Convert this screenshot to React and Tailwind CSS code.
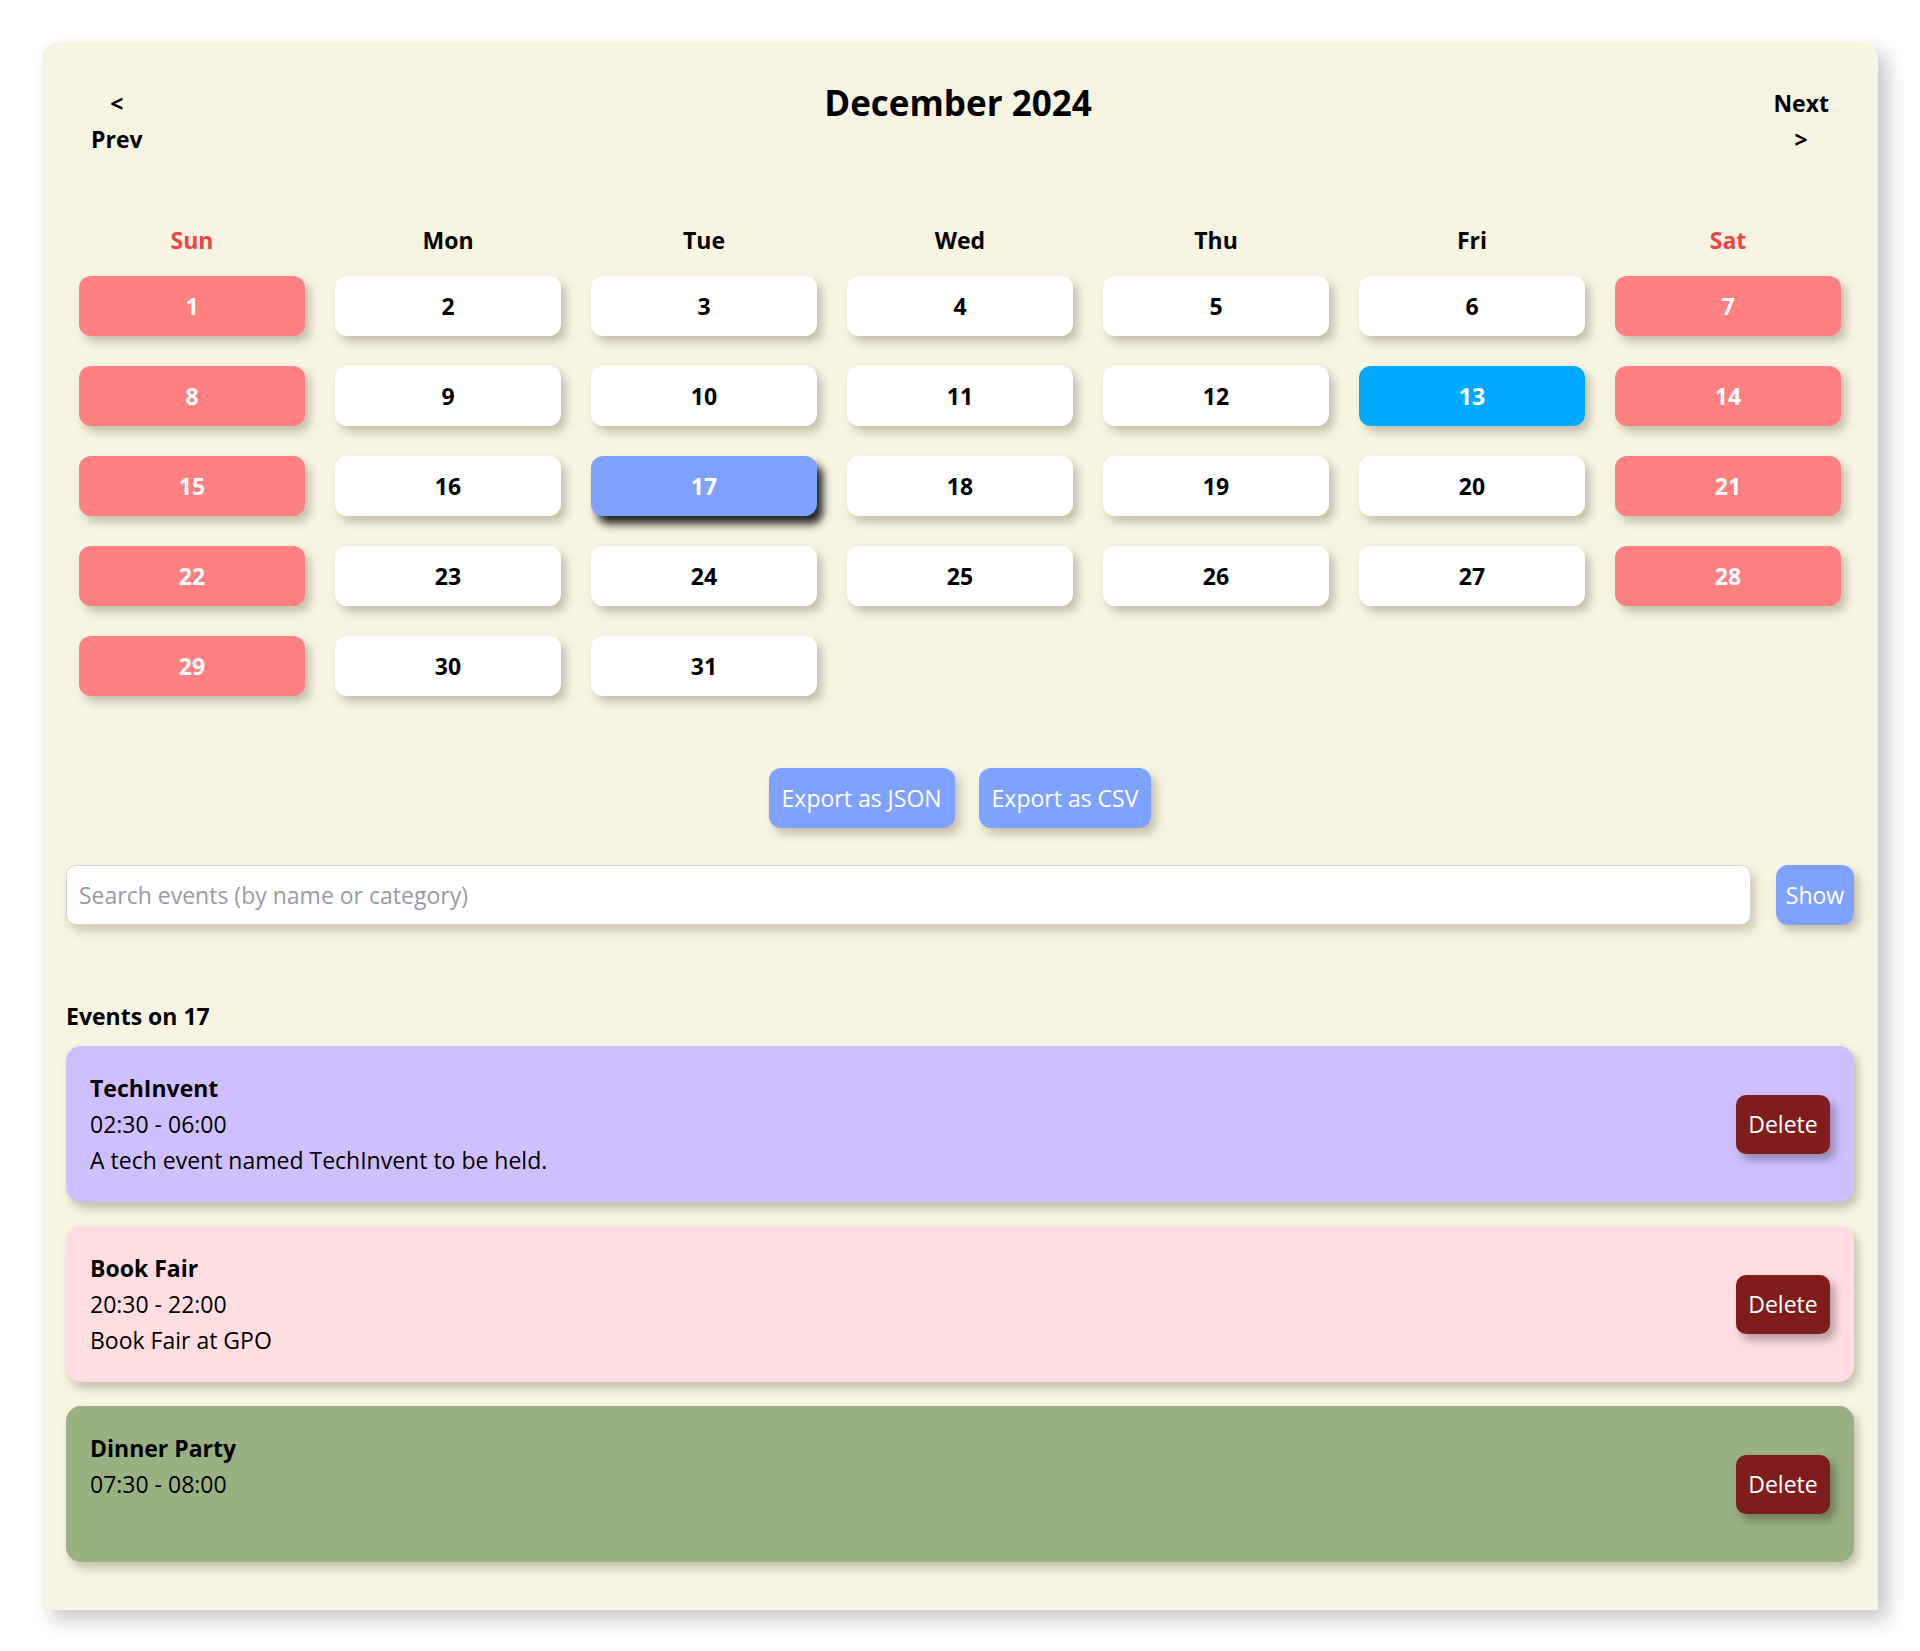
import React from "react";

const weekdays = ["Sun", "Mon", "Tue", "Wed", "Thu", "Fri", "Sat"];

const events = [
  { title: "TechInvent", time: "02:30 - 06:00", desc: "A tech event named TechInvent to be held.", color: "bg-[#d0bfff]" },
  { title: "Book Fair", time: "20:30 - 22:00", desc: "Book Fair at GPO", color: "bg-[#ffdde0]" },
  { title: "Dinner Party", time: "07:30 - 08:00", desc: "", color: "bg-[#99b080]" },
];

function DayCell({ day, col }) {
  const weekend = col === 0 || col === 6;
  let cls = "bg-white text-black shadow-[5px_6px_10px_rgba(80,70,40,0.3)]";
  if (day === 13) cls = "bg-[#00aaff] text-white shadow-[5px_6px_10px_rgba(80,70,40,0.3)]";
  else if (day === 17) cls = "bg-[#80a2ff] text-white shadow-[6px_8px_8px_rgba(0,0,0,0.85)]";
  else if (weekend) cls = "bg-[#ff8080] text-white shadow-[5px_6px_10px_rgba(80,70,40,0.3)]";
  return (
    <div className={`h-[60px] rounded-[12px] flex items-center justify-center font-bold ${cls}`}>
      {day}
    </div>
  );
}

export default function App() {
  const days = Array.from({ length: 31 }, (_, i) => i + 1);

  return (
    <div
      className="min-h-[1651px] bg-white p-[42px] pb-[41px] text-black text-[23px] leading-[36px]"
      style={{ fontFamily: '"Open Sans", "Noto Sans", sans-serif' }}
    >
      <div className="bg-[#f7f4e2] rounded-t-[16px] shadow-[10px_10px_20px_rgba(0,0,0,0.22)] px-[24px] pt-[43px] pb-[48px]">
        {/* Header */}
        <div className="flex items-start justify-between px-[13px]">
          <button className="flex flex-col items-center px-3 font-bold leading-[36px]">
            <span>&lt;</span>
            <span>Prev</span>
          </button>
          <h1 className="text-[35px] leading-[36px] font-bold">December 2024</h1>
          <button className="flex flex-col items-center px-3 font-bold leading-[36px]">
            <span>Next</span>
            <span>&gt;</span>
          </button>
        </div>

        {/* Weekdays */}
        <div className="grid grid-cols-7 gap-x-[30px] mx-[13px] mt-[65px] mb-[18px]">
          {weekdays.map((d, i) => (
            <div
              key={d}
              className={`text-center font-bold ${i === 0 || i === 6 ? "text-[#ef4444]" : "text-black"}`}
            >
              {d}
            </div>
          ))}
        </div>

        {/* Days */}
        <div className="grid grid-cols-7 gap-[30px] mx-[13px]">
          {days.map((d) => (
            <DayCell key={d} day={d} col={(d - 1) % 7} />
          ))}
        </div>

        {/* Export */}
        <div className="flex justify-center gap-[24px] mt-[72px]">
          <button className="h-[60px] px-[13px] rounded-[12px] bg-[#80a2ff] text-white shadow-[5px_6px_10px_rgba(80,70,40,0.3)]">
            Export as JSON
          </button>
          <button className="h-[60px] px-[13px] rounded-[12px] bg-[#80a2ff] text-white shadow-[5px_6px_10px_rgba(80,70,40,0.3)]">
            Export as CSV
          </button>
        </div>

        {/* Search */}
        <div className="flex items-center gap-[25px] mt-[37px]">
          <input
            placeholder="Search events (by name or category)"
            className="flex-1 h-[60px] px-[12px] rounded-[10px] border border-[#d4d4d4] bg-white outline-none placeholder:text-[#9a9aa6] shadow-[4px_6px_10px_rgba(80,70,40,0.25)]"
          />
          <button className="h-[60px] w-[78px] rounded-[12px] bg-[#80a2ff] text-white shadow-[5px_6px_10px_rgba(80,70,40,0.3)]">
            Show
          </button>
        </div>

        {/* Events */}
        <h2 className="font-bold mt-[73px] mb-[12px]">Events on 17</h2>
        <div className="flex flex-col gap-[24px]">
          {events.map((e) => (
            <div
              key={e.title}
              className={`${e.color} rounded-[15px] p-[24px] flex items-center justify-between shadow-[4px_6px_10px_rgba(80,70,40,0.3)]`}
            >
              <div>
                <p className="font-bold">{e.title}</p>
                <p>{e.time}</p>
                <p className="h-[36px]">{e.desc}</p>
              </div>
              <button className="h-[59px] w-[94px] rounded-[10px] bg-[#7f1d1d] text-white shadow-[5px_6px_10px_rgba(0,0,0,0.3)]">
                Delete
              </button>
            </div>
          ))}
        </div>
      </div>
    </div>
  );
}
